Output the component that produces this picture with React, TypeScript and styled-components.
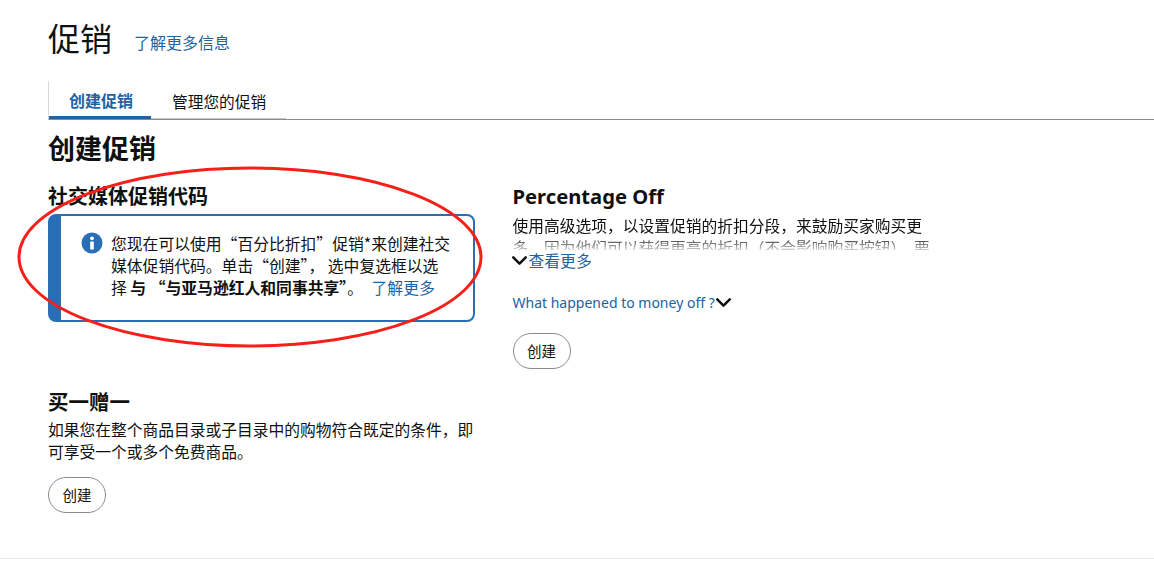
import styled, { createGlobalStyle } from "styled-components";
import { ChevronDown } from "lucide-react";

const GlobalStyle = createGlobalStyle`
  html, body {
    margin: 0;
    padding: 0;
    background: #fff;
  }
  body {
    font-family: "Noto Sans CJK SC", "Noto Sans", sans-serif;
    color: #0f1111;
    overflow: hidden;
  }
`;

const Page = styled.div`
  position: relative;
  width: 1154px;
  height: 570px;
  overflow: hidden;
`;

const Content = styled.div`
  padding: 14px 0 0 48px;
  height: 558px;
  box-sizing: border-box;
`;

const TitleRow = styled.div`
  display: flex;
  align-items: center;
  gap: 22px;
  height: 47px;
`;

const Title = styled.h1`
  margin: 0;
  font-size: 32px;
  font-weight: 400;
  line-height: 47px;
`;

const Link = styled.a`
  color: #2162a1;
`;

const TitleLink = styled(Link)`
  padding-top: 10px;
  font-size: 16px;
  line-height: 23px;
`;

const NoticeLink = styled(Link)`
  margin-left: 5px;
`;

const TabBar = styled.div`
  display: flex;
  height: 38px;
  margin-top: 20px;
  border-left: 1px solid #d5d9d9;
  border-bottom: 1px solid #888c8c;
`;

const Tab = styled.div<{ $active?: boolean }>`
  display: flex;
  align-items: center;
  box-sizing: border-box;
  height: 38px;
  padding: ${({ $active }) => ($active ? "3px 18px 0 20px" : "3px 20px 0 21px")};
  font-size: ${({ $active }) => ($active ? "16px" : "15.7px")};
  font-weight: ${({ $active }) => ($active ? 700 : 400)};
  color: ${({ $active }) => ($active ? "#2162a1" : "#0f1111")};
  border-bottom: ${({ $active }) => ($active ? "3px solid #2162a1" : "1px solid #c4c7c7")};
`;

const PageHeading = styled.h2`
  margin: 8px 0 0;
  font-size: 27px;
  font-weight: 700;
  line-height: 40px;
`;

const Columns = styled.div`
  display: grid;
  grid-template-columns: 427px 427px;
  column-gap: 37.5px;
  margin-top: 13px;
`;

const Column = styled.section`
  display: flex;
  flex-direction: column;
  align-items: flex-start;
`;

const OfferHeading = styled.h3`
  margin: 0;
  font-size: 20px;
  font-weight: 700;
  line-height: 30px;
`;

const LatinHeading = styled(OfferHeading)`
  font-family: "Noto Sans", sans-serif;
  font-size: 20.2px;
`;

const Notice = styled.div`
  display: flex;
  gap: 8px;
  width: 427px;
  height: 108px;
  margin-top: 3px;
  padding: 17px 20px 0 20px;
  box-sizing: border-box;
  border: 2px solid #2a6fb5;
  border-left-width: 13px;
  border-radius: 8px;
`;

const NoticeIcon = styled.svg`
  flex: none;
  width: 22px;
  height: 22px;
  margin-top: -1px;
`;

const NoticeText = styled.p`
  margin: 0;
  font-size: 15.8px;
  line-height: 22px;
`;

const Strong = styled.b`
  font-weight: 700;
`;

const Body = styled.p`
  margin: 0;
  font-size: 15.75px;
  line-height: 22px;
`;

const Clamped = styled(Body)`
  height: 35px;
  margin-top: 4px;
  overflow: hidden;
  mask-image: linear-gradient(to bottom, #000 60%, rgba(0, 0, 0, 0.2) 100%);
`;

const Expander = styled.div`
  display: flex;
  align-items: center;
  gap: 3px;
  height: 23px;
  margin-top: -1px;
  font-size: 15.8px;
`;

const MoneyOff = styled.div`
  display: flex;
  align-items: center;
  gap: 2px;
  margin-top: 19px;
  height: 23px;
  font-family: "Noto Sans", sans-serif;
  font-size: 14px;
  color: #2162a1;
`;

const Chevron = styled(ChevronDown)`
  flex: none;
  margin: 0 -6px 0 -6px;
  color: #0f1111;
`;

const CreateButton = styled.button`
  width: 58px;
  height: 36px;
  margin-top: 19px;
  padding: 0 0 2px;
  background: #fff;
  border: 1px solid #888c8c;
  border-radius: 18px;
  font-family: inherit;
  font-size: 14.5px;
  color: #0f1111;
`;

const BogoSection = styled(Column)`
  width: 427px;
  margin-top: 67px;
`;

const BogoHeading = styled(OfferHeading)`
  font-size: 20.5px;
  line-height: 24px;
  margin-bottom: 6px;
`;

const BogoButton = styled(CreateButton)`
  margin-top: 14px;
`;

const Footer = styled.div`
  border-top: 1px solid #e7e7e7;
`;

const Annotation = styled.svg`
  position: absolute;
  left: 0;
  top: 0;
  width: 1154px;
  height: 570px;
  pointer-events: none;
`;

export default function App() {
  return (
    <Page>
      <GlobalStyle />
      <Content>
        <TitleRow>
          <Title>促销</Title>
          <TitleLink>了解更多信息</TitleLink>
        </TitleRow>
        <TabBar>
          <Tab $active>创建促销</Tab>
          <Tab>管理您的促销</Tab>
        </TabBar>
        <PageHeading>创建促销</PageHeading>
        <Columns>
          <Column>
            <OfferHeading>社交媒体促销代码</OfferHeading>
            <Notice>
              <NoticeIcon viewBox="0 0 22 22">
                <circle cx="11" cy="11" r="10.5" fill="#2a6fb5" />
                <circle cx="11" cy="6.3" r="1.9" fill="#fff" />
                <rect x="9.2" y="9.6" width="3.6" height="7.8" rx="0.6" fill="#fff" />
              </NoticeIcon>
              <NoticeText>
                您现在可以使用“百分比折扣”促销*来创建社交媒体促销代码。单击“创建”， 选中复选框以选
                <br />
                择 <Strong>与 “与亚马逊红人和同事共享”</Strong>。 <NoticeLink>了解更多</NoticeLink>
              </NoticeText>
            </Notice>
            <BogoSection>
              <BogoHeading>买一赠一</BogoHeading>
              <Body>如果您在整个商品目录或子目录中的购物符合既定的条件，即可享受一个或多个免费商品。</Body>
              <BogoButton>创建</BogoButton>
            </BogoSection>
          </Column>
          <Column>
            <LatinHeading>Percentage Off</LatinHeading>
            <Clamped>使用高级选项，以设置促销的折扣分段，来鼓励买家购买更多，因为他们可以获得更高的折扣（不会影响购买按钮）。要</Clamped>
            <Expander>
              <Chevron size={25} strokeWidth={2.4} />
              <Link>查看更多</Link>
            </Expander>
            <MoneyOff>
              What happened to money off ?
              <Chevron size={25} strokeWidth={2.4} />
            </MoneyOff>
            <CreateButton>创建</CreateButton>
          </Column>
        </Columns>
      </Content>
      <Footer />
      <Annotation viewBox="0 0 1154 570">
        <ellipse cx="250" cy="257" rx="231" ry="89" fill="none" stroke="#f5201a" strokeWidth="3" />
      </Annotation>
    </Page>
  );
}
